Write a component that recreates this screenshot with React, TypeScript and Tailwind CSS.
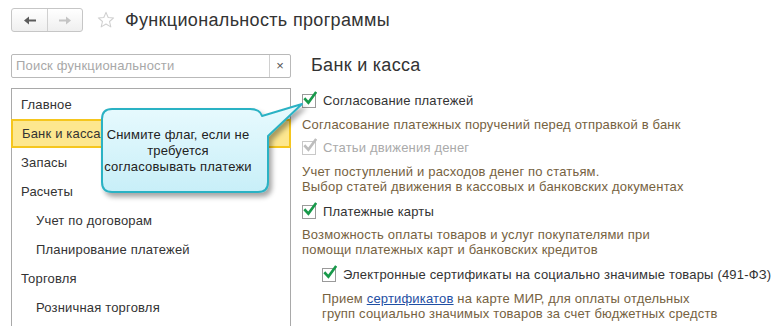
import React from "react";

function Check({ disabled = false }: { disabled?: boolean }) {
  return (
    <span className="relative inline-block w-[14px] h-[14px] shrink-0">
      <span
        className={
          "absolute inset-0 border bg-white " +
          (disabled ? "border-[#c8c8c8]" : "border-[#9a9a9a]")
        }
      />
      <svg
        className="absolute left-[1px] top-[-3px]"
        width="14"
        height="15"
        viewBox="0 0 14 15"
      >
        <path
          d="M2.2 8.2 L5.4 11.6 L12.4 2"
          fill="none"
          stroke={disabled ? "#bdbdbd" : "#17994a"}
          strokeWidth="2.6"
          strokeLinecap="square"
        />
      </svg>
    </span>
  );
}

function Arrow({ dir, color }: { dir: "l" | "r"; color: string }) {
  return (
    <svg width="12" height="9" viewBox="0 0 12 9">
      <path
        d={dir === "l" ? "M0 4.5 L5 0.5 V3.5 H12 V5.5 H5 V8.5 Z" : "M12 4.5 L7 0.5 V3.5 H0 V5.5 H7 V8.5 Z"}
        fill={color}
      />
    </svg>
  );
}

const items: { t: string; sub?: boolean; sel?: boolean }[] = [
  { t: "Главное" },
  { t: "Банк и касса", sel: true },
  { t: "Запасы" },
  { t: "Расчеты" },
  { t: "Учет по договорам", sub: true },
  { t: "Планирование платежей", sub: true },
  { t: "Торговля" },
  { t: "Розничная торговля", sub: true },
];

export default function App() {
  return (
    <div className="relative w-[777px] h-[326px] overflow-hidden bg-white text-[#333] font-['Liberation_Sans',Arial,sans-serif]">
      {/* Top bar */}
      <div className="flex items-center pl-[11px] pt-[8px] h-[32px]">
        <div className="flex h-[24px] w-[72px] rounded-[3px] border border-[#c6c6c6] bg-gradient-to-b from-white to-[#efefef]">
          <div className="flex w-[36px] items-center justify-center border-r border-[#d0d0d0]">
            <Arrow dir="l" color="#5c5c5c" />
          </div>
          <div className="flex flex-1 items-center justify-center">
            <Arrow dir="r" color="#c4c4c4" />
          </div>
        </div>
        <svg className="ml-[14px]" width="18" height="18" viewBox="0 0 24 24">
          <path
            d="M12 1.8 L14.9 8.6 L22.2 9.2 L16.7 14 L18.4 21.2 L12 17.4 L5.6 21.2 L7.3 14 L1.8 9.2 L9.1 8.6 Z"
            fill="none"
            stroke="#cfcfcf"
            strokeWidth="1.4"
            strokeLinejoin="round"
          />
        </svg>
        <div className="ml-[10px] text-[18px] leading-[22px] tracking-[0.33px] text-[#333]">
          Функциональность программы
        </div>
      </div>

      {/* Body */}
      <div className="flex pt-[22px] pl-[11px]">
        {/* Left column */}
        <div className="w-[280px] shrink-0 flex flex-col">
          <div className="flex h-[24px] rounded-[2px] border border-[#b9b9b9] bg-white">
            <div className="flex flex-1 items-center pl-[4px] text-[13px] tracking-[0.18px] text-[#a8a8a8]">
              Поиск функциональности
            </div>
            <div className="flex w-[21px] items-center justify-center border-l border-[#d0d0d0] text-[13px] text-[#555]">
              ×
            </div>
          </div>
          <div className="mt-[10px] h-[260px] border-x border-t border-[#a9a9a9] pt-[1px]">
            {items.map((it) => (
              <div
                key={it.t}
                className={
                  "flex h-[29px] items-center text-[13px] tracking-[0.18px] text-[#333] " +
                  (it.sub ? "pl-[24px] " : "pl-[9px] ") +
                  (it.sel ? "bg-[#fde78f] border-2 border-[#f5c61e] pl-[7px] -mx-[1px]" : "")
                }
              >
                {it.t}
              </div>
            ))}
          </div>
        </div>

        {/* Right column */}
        <div className="flex flex-col pl-[11px] text-[13px] tracking-[0.18px]">
          <div className="h-[24px] pl-[9px] text-[18px] leading-[22px] tracking-[0.3px] text-[#333]">
            Банк и касса
          </div>

          <div className="mt-[15px] flex h-[16px] items-center">
            <Check />
            <span className="ml-[7px] text-[#333]">Согласование платежей</span>
          </div>
          <div className="mt-[8px] leading-[15px] text-[#76623f]">
            Согласование платежных поручений перед отправкой в банк
          </div>

          <div className="mt-[8px] flex h-[16px] items-center">
            <Check disabled />
            <span className="ml-[7px] text-[#aaaaaa]">Статьи движения денег</span>
          </div>
          <div className="mt-[8px] leading-[15px] text-[#76623f]">
            Учет поступлений и расходов денег по статьям.
            <br />
            Выбор статей движения в кассовых и банковских документах
          </div>

          <div className="mt-[10px] flex h-[16px] items-center">
            <Check />
            <span className="ml-[7px] text-[#333]">Платежные карты</span>
          </div>
          <div className="mt-[8px] leading-[14.5px] text-[#76623f]">
            Возможность оплаты товаров и услуг покупателями при
            <br />
            помощи платежных карт и банковских кредитов
          </div>

          <div className="mt-[10px] ml-[20px] flex h-[16px] items-center">
            <Check />
            <span className="ml-[7px] text-[#333]">
              Электронные сертификаты на социально значимые товары (491-ФЗ)
            </span>
          </div>
          <div className="mt-[8px] ml-[20px] leading-[15px] text-[#76623f]">
            Прием <span className="text-[#1f4fa3] underline">сертификатов</span> на карте МИР, для оплаты отдельных
            <br />
            групп социально значимых товаров за счет бюджетных средств
          </div>
        </div>
      </div>

      {/* Callout */}
      <svg
        className="absolute left-[100px] top-[100px]"
        width="210"
        height="106"
        viewBox="0 0 210 106"
      >
        <defs>
          <linearGradient id="cg" x1="0" y1="0" x2="0" y2="1">
            <stop offset="0" stopColor="#e8fafe" />
            <stop offset="1" stopColor="#c8eff8" />
          </linearGradient>
          <filter id="sh" x="-10%" y="-10%" width="130%" height="140%">
            <feDropShadow dx="3" dy="4" stdDeviation="2.5" floodColor="#000" floodOpacity="0.35" />
          </filter>
        </defs>
        <path
          d="M12 9 H150 Q160 9 162 16 L202 4 L168 36 V82 Q168 92 158 92 H12 Q2 92 2 82 V19 Q2 9 12 9 Z"
          fill="url(#cg)"
          stroke="#2cb2c4"
          strokeWidth="2"
          strokeLinejoin="round"
          filter="url(#sh)"
        />
      </svg>
      <div className="absolute left-[100px] top-[127px] w-[156px] text-center text-[13px] leading-[16px] tracking-[0.18px] text-[#222]">
        Снимите флаг, если не
        <br />
        требуется
        <br />
        согласовывать платежи
      </div>
    </div>
  );
}
